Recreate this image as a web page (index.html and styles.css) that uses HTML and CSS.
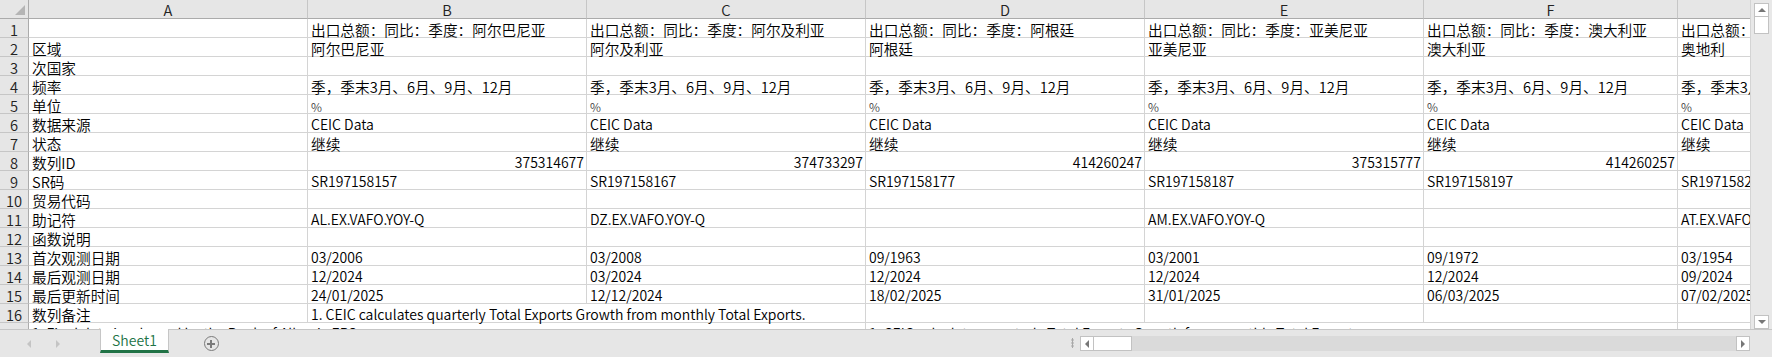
FILE: index.html
```html
<!DOCTYPE html>
<html lang="zh">
<head>
<meta charset="utf-8">
<title>Sheet1</title>
<link rel="stylesheet" href="styles.css">
</head>
<body>
<div class="app">
  <div class="main">
    <div class="sheet">
      <div class="corner"><span class="tri"></span></div>
      <div class="colh">A</div><div class="colh">B</div><div class="colh">C</div><div class="colh">D</div><div class="colh">E</div><div class="colh">F</div><div class="colh">G</div>

      <div class="rowh">1</div><div class="c"></div><div class="c">出口总额：同比：季度：阿尔巴尼亚</div><div class="c">出口总额：同比：季度：阿尔及利亚</div><div class="c">出口总额：同比：季度：阿根廷</div><div class="c">出口总额：同比：季度：亚美尼亚</div><div class="c">出口总额：同比：季度：澳大利亚</div><div class="c">出口总额：同比：季度：奥地利</div>

      <div class="rowh">2</div><div class="c">区域</div><div class="c">阿尔巴尼亚</div><div class="c">阿尔及利亚</div><div class="c">阿根廷</div><div class="c">亚美尼亚</div><div class="c">澳大利亚</div><div class="c">奥地利</div>

      <div class="rowh">3</div><div class="c">次国家</div><div class="c"></div><div class="c"></div><div class="c"></div><div class="c"></div><div class="c"></div><div class="c"></div>

      <div class="rowh">4</div><div class="c">频率</div><div class="c">季，季末3月、6月、9月、12月</div><div class="c">季，季末3月、6月、9月、12月</div><div class="c">季，季末3月、6月、9月、12月</div><div class="c">季，季末3月、6月、9月、12月</div><div class="c">季，季末3月、6月、9月、12月</div><div class="c">季，季末3月、6月、9月、12月</div>

      <div class="rowh">5</div><div class="c">单位</div><div class="c"><span class="pct">%</span></div><div class="c"><span class="pct">%</span></div><div class="c"><span class="pct">%</span></div><div class="c"><span class="pct">%</span></div><div class="c"><span class="pct">%</span></div><div class="c"><span class="pct">%</span></div>

      <div class="rowh">6</div><div class="c">数据来源</div><div class="c en">CEIC Data</div><div class="c en">CEIC Data</div><div class="c en">CEIC Data</div><div class="c en">CEIC Data</div><div class="c en">CEIC Data</div><div class="c en">CEIC Data</div>

      <div class="rowh">7</div><div class="c">状态</div><div class="c">继续</div><div class="c">继续</div><div class="c">继续</div><div class="c">继续</div><div class="c">继续</div><div class="c">继续</div>

      <div class="rowh">8</div><div class="c">数列ID</div><div class="c en num">375314677</div><div class="c en num">374733297</div><div class="c en num">414260247</div><div class="c en num">375315777</div><div class="c en num">414260257</div><div class="c"></div>

      <div class="rowh">9</div><div class="c">SR码</div><div class="c en">SR197158157</div><div class="c en">SR197158167</div><div class="c en">SR197158177</div><div class="c en">SR197158187</div><div class="c en">SR197158197</div><div class="c en">SR197158207</div>

      <div class="rowh">10</div><div class="c">贸易代码</div><div class="c"></div><div class="c"></div><div class="c"></div><div class="c"></div><div class="c"></div><div class="c"></div>

      <div class="rowh">11</div><div class="c">助记符</div><div class="c en">AL.EX.VAFO.YOY-Q</div><div class="c en">DZ.EX.VAFO.YOY-Q</div><div class="c"></div><div class="c en">AM.EX.VAFO.YOY-Q</div><div class="c"></div><div class="c en">AT.EX.VAFO.YOY-Q</div>

      <div class="rowh">12</div><div class="c">函数说明</div><div class="c"></div><div class="c"></div><div class="c"></div><div class="c"></div><div class="c"></div><div class="c"></div>

      <div class="rowh">13</div><div class="c">首次观测日期</div><div class="c en">03/2006</div><div class="c en">03/2008</div><div class="c en">09/1963</div><div class="c en">03/2001</div><div class="c en">09/1972</div><div class="c en">03/1954</div>

      <div class="rowh">14</div><div class="c">最后观测日期</div><div class="c en">12/2024</div><div class="c en">03/2024</div><div class="c en">12/2024</div><div class="c en">12/2024</div><div class="c en">12/2024</div><div class="c en">09/2024</div>

      <div class="rowh">15</div><div class="c">最后更新时间</div><div class="c en">24/01/2025</div><div class="c en">12/12/2024</div><div class="c en">18/02/2025</div><div class="c en">31/01/2025</div><div class="c en">06/03/2025</div><div class="c en">07/02/2025</div>

      <div class="rowh">16</div><div class="c">数列备注</div><div class="c en span2">1. CEIC calculates quarterly Total Exports Growth from monthly Total Exports.</div><div class="c"></div><div class="c"></div><div class="c"></div><div class="c"></div>

      <div class="rowh">17</div><div class="c en span3">1. Final data is released by the Bank of Albania ERS.</div><div class="c en span3">1. CEIC calculates quarterly Total Exports Growth from monthly Total Exports.</div><div class="c"></div>
    </div>
    <div class="vscroll">
      <div class="sbtn"><span class="arr up"></span></div>
      <div class="vthumb"></div>
      <div class="vtrack"></div>
      <div class="sbtn"><span class="arr down"></span></div>
    </div>
  </div>
  <div class="tabbar">
    <div class="nav"><span class="navarr left"></span><span class="navarr right"></span></div>
    <div class="tab">Sheet1</div>
    <div class="addwrap"><span class="add"></span></div>
    <div class="fill"></div>
    <div class="dots"></div>
    <div class="hscroll">
      <div class="hbtn"><span class="arr left"></span></div>
      <div class="hthumb"></div>
      <div class="htrack"></div>
      <div class="hbtn"><span class="arr right"></span></div>
    </div>
    <div class="cornerbox"></div>
  </div>
</div>
</body>
</html>
```
FILE: styles.css
```css
* { box-sizing: border-box; }
html, body { margin: 0; padding: 0; }
body {
  width: 1772px;
  height: 357px;
  overflow: hidden;
  background: #fff;
  color: #000;
  font-family: "Noto Sans CJK SC", "Liberation Sans", sans-serif;
  font-size: 14.67px;
  font-weight: 350;
}
.app { display: flex; flex-direction: column; height: 357px; }
.main { display: flex; height: 329px; overflow: hidden; }
.sheet {
  width: 1750px;
  flex: none;
  display: grid;
  grid-template-columns: 29px 279px 279px 279px 279px 279px 254px 279px;
  grid-auto-rows: 19px;
  overflow: hidden;
}
.corner {
  background: #e6e6e6;
  border-right: 1px solid #ababab;
  border-bottom: 1px solid #ababab;
  position: relative;
}
.tri {
  position: absolute;
  right: 3px;
  bottom: 3px;
  width: 0; height: 0;
  border-left: 10px solid transparent;
  border-bottom: 10px solid #b5b5b5;
}
.colh {
  background: #e6e6e6;
  border-right: 1px solid #c6c6c6;
  border-bottom: 1px solid #ababab;
  text-align: center;
  line-height: 17px;
  padding-top: 1px;
  color: #222;
}
.rowh {
  background: #e6e6e6;
  border-right: 1px solid #ababab;
  border-bottom: 1px solid #c6c6c6;
  text-align: center;
  line-height: 17px;
  padding-top: 2px;
  color: #222;
}
.c {
  border-right: 1px solid #d4d4d4;
  border-bottom: 1px solid #d4d4d4;
  white-space: nowrap;
  padding: 2px 3px 0;
  line-height: 17px;
  overflow: visible;
}
.en { font-size: 14px; }
.num { text-align: right; padding-right: 2px; }
.span2 { grid-column: span 2; }
.span3 { grid-column: span 3; }
.pct { font-size: 12px; color: #444; }

.vscroll {
  flex: 1;
  background: #e8e8e8;
  border-left: 1px solid #d4d4d4;
  display: flex;
  flex-direction: column;
  align-items: center;
  padding: 3px 0 0;
}
.sbtn {
  width: 15px;
  height: 14px;
  background: #fff;
  border: 1px solid #c2c2c2;
  display: flex;
  align-items: center;
  justify-content: center;
  flex: none;
}
.vthumb {
  width: 15px;
  height: 17px;
  background: #fff;
  border: 1px solid #c2c2c2;
  border-top: none;
  flex: none;
}
.vtrack { flex: 1; }
.arr { width: 0; height: 0; display: block; }
.arr.up { border-left: 4px solid transparent; border-right: 4px solid transparent; border-bottom: 4px solid #777; }
.arr.down { border-left: 4px solid transparent; border-right: 4px solid transparent; border-top: 4px solid #777; }
.arr.left { border-top: 4px solid transparent; border-bottom: 4px solid transparent; border-right: 4px solid #777; }
.arr.right { border-top: 4px solid transparent; border-bottom: 4px solid transparent; border-left: 4px solid #777; }

.tabbar {
  height: 28px;
  background: #e6e6e6;
  border-top: 1px solid #c6c6c6;
  display: flex;
  align-items: stretch;
}
.nav {
  width: 100px;
  display: flex;
  align-items: center;
  gap: 25px;
  padding-left: 27px;
}
.navarr { width: 0; height: 0; display: block; }
.navarr.left { border-top: 4px solid transparent; border-bottom: 4px solid transparent; border-right: 4px solid #c4c4c4; }
.navarr.right { border-top: 4px solid transparent; border-bottom: 4px solid transparent; border-left: 4px solid #c4c4c4; }
.tab {
  width: 69px;
  height: 24px;
  margin-top: -1px;
  background: #fff;
  border-left: 1px solid #c6c6c6;
  border-right: 1px solid #c6c6c6;
  border-bottom: 3px solid #217346;
  color: #217346;
  font-family: "Noto Sans CJK SC", sans-serif;
  font-size: 14px;
  display: flex;
  align-items: center;
  justify-content: center;
}
.addwrap {
  width: 84px;
  display: flex;
  align-items: center;
  justify-content: center;
}
.add {
  width: 15px;
  height: 15px;
  border: 1.5px solid #7a7a7a;
  border-radius: 50%;
  position: relative;
  display: block;
}
.add::before, .add::after {
  content: "";
  position: absolute;
  background: #7a7a7a;
  left: 50%; top: 50%;
  transform: translate(-50%, -50%);
}
.add::before { width: 8px; height: 2px; }
.add::after { width: 2px; height: 8px; }
.fill { flex: 1; }
.dots {
  width: 16px;
  background: radial-gradient(circle, #a8a8a8 1px, transparent 1.3px) center / 3px 3px repeat-y;
  margin-top: 8px;
  margin-bottom: 9px;
}
.hscroll {
  width: 670px;
  display: flex;
  align-items: center;
  background: #dadada;
  margin: 6px 0 6px;
}
.hbtn {
  width: 14px;
  height: 15px;
  background: #fff;
  border: 1px solid #c2c2c2;
  display: flex;
  align-items: center;
  justify-content: center;
}
.hthumb {
  width: 38px;
  height: 15px;
  background: #fff;
  border: 1px solid #c2c2c2;
  border-left: none;
}
.htrack { flex: 1; }
.cornerbox { width: 22px; }
```
